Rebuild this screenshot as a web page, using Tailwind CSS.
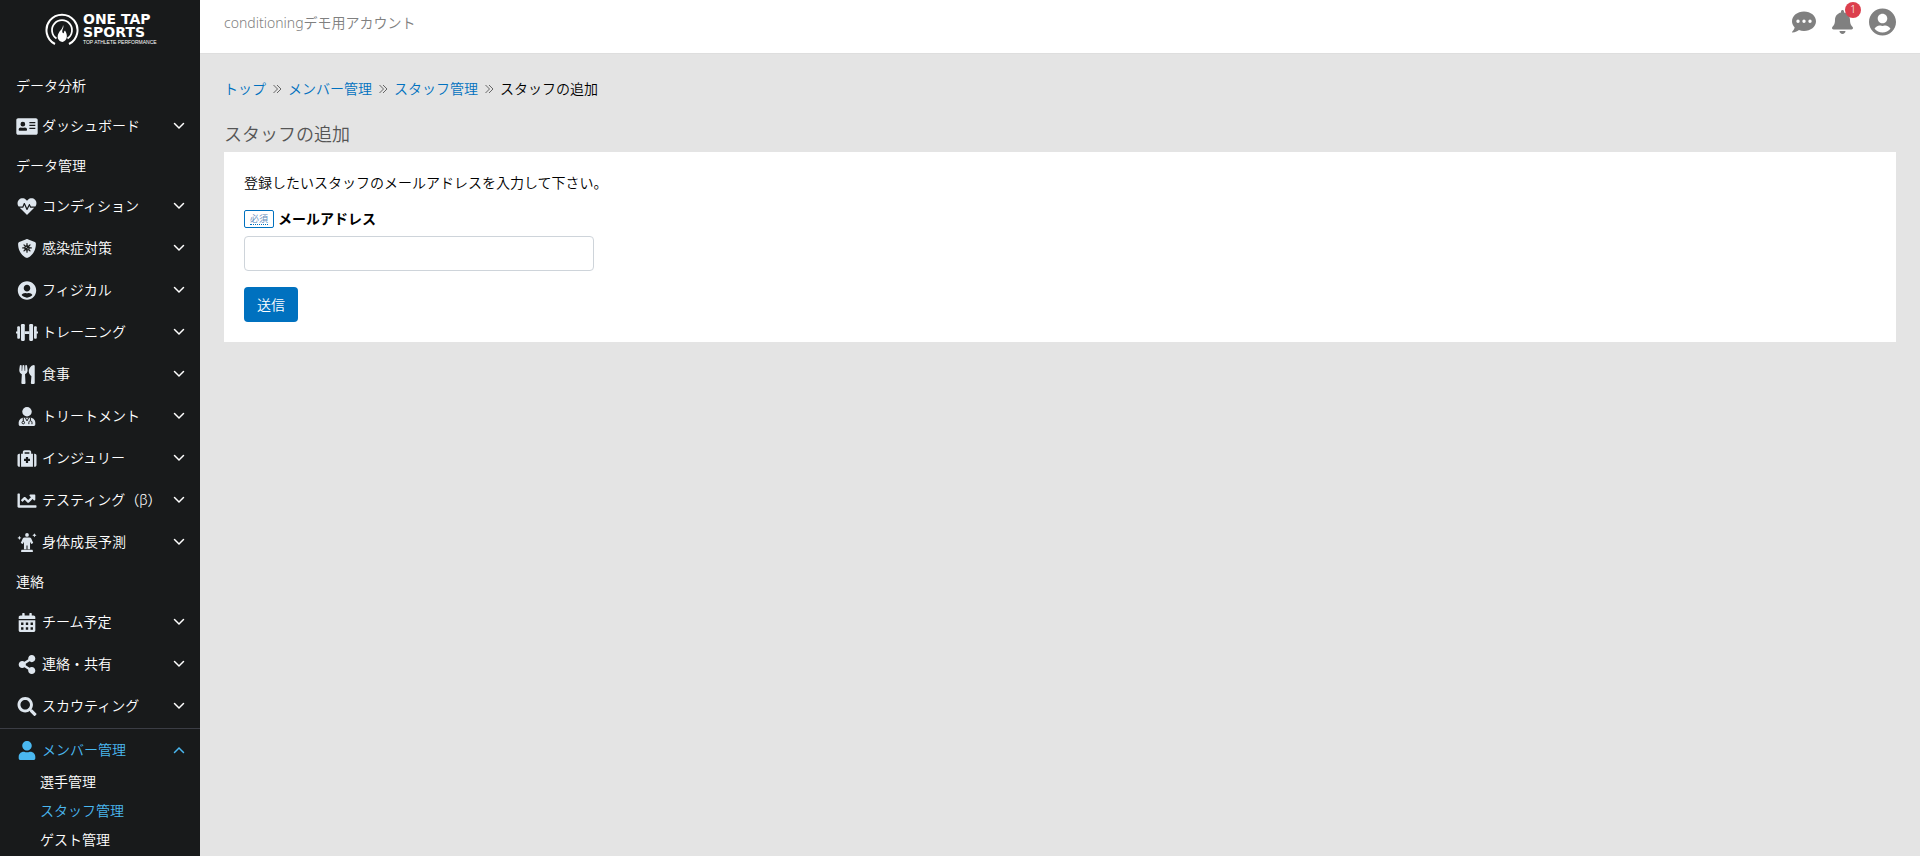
<!DOCTYPE html>
<html lang="ja">
<head>
  <meta charset="UTF-8">
  <title>スタッフの追加 | ONE TAP SPORTS</title>
  <meta name="viewport" content="width=device-width, initial-scale=1.0">
  <script src="https://cdn.jsdelivr.net/npm/@tailwindcss/browser@4"></script>
</head>
<body class="flex h-screen overflow-hidden bg-[#e4e4e4] font-['Noto_Sans','Noto_Sans_CJK_JP',sans-serif] text-sm font-[350] text-black">

  <!-- アイコン定義 -->
  <svg class="hidden">
    <symbol id="down" viewBox="0 0 12 12"><path d="M1.5 3.5 6 8l4.5-4.5" fill="none" stroke="currentColor" stroke-width="1.5" stroke-linecap="round"/></symbol>
    <symbol id="up" viewBox="0 0 12 12"><path d="M1.5 8.5 6 4l4.5 4.5" fill="none" stroke="currentColor" stroke-width="1.5" stroke-linecap="round"/></symbol>
    <symbol id="sep" viewBox="0 0 10 10"><path d="M1.500 1l4 4-4 4M5 1l4 4-4 4" fill="none" stroke="currentColor" stroke-width="1"/></symbol>
    <symbol id="card" viewBox="0 0 576 512"><path fill-rule="evenodd" d="M48 32h480c26 0 48 22 48 48v352c0 26-22 48-48 48H48c-26 0-48-22-48-48V80c0-26 22-48 48-48zM176 128a64 64 0 1 0 0 128 64 64 0 0 0 0-128zM120 280c-31 0-56 22-56 52v20c0 12 8 20 20 20h184c12 0 20-8 20-20v-20c0-30-25-52-56-52-36 12-76 12-112 0zM352 136v32h160v-32zM352 212v32h160v-32zM352 288v32h160v-32z"/></symbol>
    <symbol id="heart" viewBox="0 0 512 512"><path d="M320.2 243.8l-49.7 99.4c-6 12.1-23.4 11.7-28.9-.6l-56.9-126.3-30 71.7H60.6l182.5 186.5c7.1 7.3 18.6 7.3 25.7 0L451.4 288H342.3l-22.1-44.2zM473.7 73.9l-2.4-2.5c-51.5-52.6-135.8-52.6-187.4 0L256 100l-27.9-28.5c-51.5-52.7-135.9-52.7-187.4 0l-2.4 2.4C-10.4 123.7-12.5 203 31 256h102.4l35.9-86.2c5.4-12.9 23.6-13.2 29.4-.4l58.2 129.3 49-97.9c5.9-11.8 22.7-11.8 28.6 0l27.6 55.2H481c43.5-53 41.4-132.3-7.3-182.1z"/></symbol>
    <symbol id="shield" viewBox="0 0 512 512"><path d="M466 84 274 4c-12-5-25-5-37 0L45 84c-18 7-29 24-29 44 0 198 114 335 221 380 12 5 25 5 37 0 85-36 222-159 222-380 0-20-12-37-30-44z"/><g stroke="#181a1b" stroke-width="34" stroke-linecap="round"><path d="M256 125v230M141 240h230M175 159l162 162M337 159 175 321"/></g><circle cx="256" cy="240" r="72" fill="#181a1b"/><circle cx="234" cy="224" r="17"/><circle cx="282" cy="262" r="15"/></symbol>
    <symbol id="circle-user" viewBox="0 0 496 512"><path d="M248 8C111 8 0 119 0 256s111 248 248 248 248-111 248-248S385 8 248 8zm0 96c48.600 0 88 39.400 88 88s-39.400 88-88 88-88-39.400-88-88 39.400-88 88-88zm0 344c-58.700 0-111.300-26.600-146.500-68.200 18.800-35.400 55.600-59.800 98.500-59.800 2.400 0 4.800.4 7.100 1.100 13 4.200 26.600 6.900 40.900 6.900 14.300 0 28-2.700 40.900-6.900 2.300-.7 4.700-1.100 7.100-1.100 42.900 0 79.700 24.400 98.500 59.800C359.300 421.400 306.700 448 248 448z"/></symbol>
    <symbol id="dumbbell" viewBox="0 0 640 512"><rect x="144" y="12" width="112" height="488" rx="30"/><rect x="384" y="12" width="112" height="488" rx="30"/><rect x="36" y="76" width="80" height="360" rx="28"/><rect x="524" y="76" width="80" height="360" rx="28"/><path d="M0 224h60v64H0zM580 224h60v64h-60zM250 216h140v80H250z"/></symbol>
    <symbol id="utensils" viewBox="0 0 416 512"><path d="M207.900 15.200c.8 4.700 16.100 94.500 16.100 128.800 0 52.300-27.800 89.600-68.900 104.600L168 486.700c.7 13.700-10.200 25.300-24 25.300H80c-13.700 0-24.700-11.500-24-25.300l12.900-238.100C27.700 233.600 0 196.200 0 144 0 109.600 15.300 19.900 16.100 15.200 19.300-5.100 61.400-5.400 64 16.300v141.200c1.300 3.400 15.100 3.200 16 0 1.400-25.300 7.900-139.200 8-141.800 3.300-20.800 44.700-20.800 47.900 0 .2 2.700 6.600 116.500 8 141.800.9 3.200 14.800 3.400 16 0V16.300c2.600-21.600 44.800-21.400 48-1.100zm119.200 285.700l-15 185.100c-1.200 14 9.900 26 23.900 26h56c13.300 0 24-10.700 24-24V24c0-13.200-10.700-24-24-24-82.500 0-221.400 178.500-64.900 300.900z"/></symbol>
    <symbol id="doctor" viewBox="0 0 448 512"><circle cx="224" cy="128" r="128"/><path d="M134 288h180c74 0 134 60 134 134v42c0 26-22 48-48 48H48c-26 0-48-22-48-48v-42c0-74 60-134 134-134z"/><g fill="none" stroke="#181a1b" stroke-width="26"><circle cx="124" cy="420" r="34"/><path d="M124 285v100M274 462v-44c0-60 84-60 84 0v44M316 285v84M176 285l48 90 48-90"/></g></symbol>
    <symbol id="medkit" viewBox="0 0 512 512"><path fill-rule="evenodd" d="M96 480V128h48V80c0-26 22-48 48-48h128c26 0 48 22 48 48v48h48v352zM192 128h128V88H192zM226 216v50h-50v60h50v50h60v-50h50v-60h-50v-50z"/><path d="M64 480H48c-26 0-48-22-48-48V176c0-26 22-48 48-48h16zM448 480h16c26 0 48-22 48-48V176c0-26-22-48-48-48h-16z"/></symbol>
    <symbol id="chart" viewBox="0 0 512 512"><path d="M496 384H64V80c0-8.840-7.160-16-16-16H16C7.160 64 0 71.160 0 80v336c0 17.670 14.330 32 32 32h464c8.840 0 16-7.160 16-16v-32c0-8.840-7.160-16-16-16zM464 96H345.940c-21.380 0-32.090 25.850-16.970 40.970l32.400 32.400L288 242.750l-73.370-73.370c-12.500-12.500-32.760-12.500-45.250 0l-68.690 68.690c-6.250 6.250-6.250 16.380 0 22.630l22.620 22.620c6.250 6.250 16.380 6.250 22.630 0L192 237.250l73.370 73.370c12.500 12.500 32.760 12.500 45.250 0l96-96 32.400 32.400c15.120 15.120 40.970 4.410 40.970-16.970V112c.01-8.840-7.150-16-15.990-16z"/></symbol>
    <symbol id="growth" viewBox="0 0 512 512"><circle cx="256" cy="52" r="50"/><path d="M190 120h132c22 0 38 10 48 30l54 120-54 26-32-60v200h-68V340h-28v96h-68V236l-32 60-54-26 54-120c10-20 26-30 48-30zM124 452h264c16 0 26 12 26 30v30H98v-30c0-18 10-30 26-30zM52 76l18 38 38 18-38 18-18 38-18-38-38-18 38-18zM456 4l18 38 38 18-38 18-18 38-18-38-38-18 38-18z"/></symbol>
    <symbol id="calendar" viewBox="0 0 448 512"><path fill-rule="evenodd" d="M0 464c0 26.500 21.500 48 48 48h352c26.500 0 48-21.500 48-48V192H0v272zM64 256h64v64H64zM192 256h64v64h-64zM320 256h64v64h-64zM64 384h64v64H64zM192 384h64v64h-64zM320 384h64v64h-64zM400 64h-48V16c0-8.800-7.200-16-16-16h-32c-8.800 0-16 7.200-16 16v48H160V16c0-8.800-7.200-16-16-16h-32c-8.800 0-16 7.200-16 16v48H48C21.500 64 0 85.500 0 112v48h448v-48c0-26.500-21.500-48-48-48z"/></symbol>
    <symbol id="share" viewBox="0 0 448 512"><path d="M352 320c-22.608 0-43.387 7.819-59.790 20.895l-102.486-64.054a96.551 96.551 0 0 0 0-41.683l102.486-64.054C308.613 184.181 329.392 192 352 192c53.019 0 96-42.981 96-96S405.019 0 352 0s-96 42.981-96 96c0 7.158.79 14.130 2.276 20.841L155.790 180.895C139.387 167.819 118.608 160 96 160c-53.019 0-96 42.981-96 96s42.981 96 96 96c22.608 0 43.387-7.819 59.790-20.895l102.486 64.054A96.301 96.301 0 0 0 256 416c0 53.019 42.981 96 96 96s96-42.981 96-96-42.981-96-96-96z"/></symbol>
    <symbol id="search" viewBox="0 0 512 512"><path d="M505 442.700L405.300 343c-4.500-4.500-10.600-7-17-7H372c27.600-35.300 44-79.700 44-128C416 93.100 322.900 0 208 0S0 93.100 0 208s93.100 208 208 208c48.300 0 92.700-16.400 128-44v16.300c0 6.400 2.500 12.500 7 17l99.700 99.700c9.400 9.400 24.600 9.400 33.900 0l28.300-28.300c9.400-9.400 9.400-24.600.1-34zM208 336c-70.700 0-128-57.200-128-128 0-70.700 57.200-128 128-128 70.700 0 128 57.200 128 128 0 70.700-57.200 128-128 128z"/></symbol>
    <symbol id="user" viewBox="0 0 448 512"><path d="M224 256c70.700 0 128-57.300 128-128S294.700 0 224 0 96 57.300 96 128s57.300 128 128 128zm89.600 32h-16.700c-22.200 10.200-46.900 16-72.900 16s-50.600-5.800-72.900-16h-16.700C60.200 288 0 348.200 0 422.400V464c0 26.500 21.500 48 48 48h352c26.500 0 48-21.500 48-48v-41.600c0-74.200-60.200-134.400-134.400-134.400z"/></symbol>
    <symbol id="bell" viewBox="0 0 448 512"><path d="M224 512c35.320 0 63.970-28.650 63.970-64H160.030c0 35.350 28.650 64 63.970 64zm215.390-149.710c-19.320-20.760-55.470-51.990-55.470-154.290 0-77.700-54.480-139.900-127.940-155.160V32c0-17.670-14.320-32-31.980-32s-31.980 14.330-31.980 32v20.840C118.560 68.100 64.080 130.300 64.080 208c0 102.300-36.150 133.530-55.470 154.290-6 6.450-8.660 14.160-8.610 21.710.11 16.400 12.980 32 32.100 32h383.800c19.120 0 32-15.600 32.100-32 .05-7.550-2.610-15.270-8.610-21.710z"/></symbol>
    <symbol id="comment" viewBox="0 0 512 512"><path fill-rule="evenodd" d="M256 32C114.600 32 0 125.100 0 240c0 49.600 21.400 95 57 130.700C44.500 421.100 2.700 466 2.200 466.500c-2.200 2.300-2.800 5.700-1.500 8.700S4.800 480 8 480c66.300 0 116-31.800 140.600-51.400 32.700 12.300 69 19.400 107.400 19.400 141.400 0 256-93.100 256-208S397.400 32 256 32zM128 204a36 36 0 1 0 0 72 36 36 0 0 0 0-72zM256 204a36 36 0 1 0 0 72 36 36 0 0 0 0-72zM384 204a36 36 0 1 0 0 72 36 36 0 0 0 0-72z"/></symbol>
  </svg>

  <!-- サイドバー -->
  <aside class="flex w-[200px] shrink-0 flex-col overflow-hidden bg-[#181a1b] text-white">
    <a href="/" class="flex h-[67px] shrink-0 items-start gap-1 pl-[45px] pt-[13px]">
      <svg class="h-8 w-[34px] shrink-0" viewBox="0 0 34 32" fill="none" stroke="#fff">
        <path d="M10 31A15.500 15.500 0 1 1 24 31" stroke-width="2"/>
        <path d="M11.500 25.500A10 10 0 1 1 22.500 25.500" stroke-width="1.800"/>
        <path d="M18 12c1.500 3-1.500 4.500-.5 7.500.3 1.200 1.500 1 1.500-.2 0-.6.300-1.300 1-1.800 3 4.500 2.500 10-2.500 11.500-5-1-6-5.500-3.500-9.500 1.500-2.500 4-4 4-7.500z" fill="#fff" stroke="none"/>
      </svg>
      <span class="flex flex-col whitespace-nowrap font-['DejaVu_Sans'] text-sm/[13px] font-bold">
        <span>ONE TAP</span>
        <span>SPORTS</span>
        <span class="font-['Liberation_Sans'] text-[5px]/[6px] font-normal">TOP ATHLETE PERFORMANCE</span>
      </span>
    </a>
    <nav>
      <h2 class="flex h-[38px] items-center px-4">データ分析</h2>
      <ul>
        <li><button class="flex h-[42px] w-full items-center gap-1 pl-4 pr-[15px]"><svg class="h-[19px] w-[22px] fill-[#dee6ee]"><use href="#card"/></svg><span class="grow text-left">ダッシュボード</span><svg class="size-3"><use href="#down"/></svg></button></li>
      </ul>
      <h2 class="flex h-[38px] items-center px-4">データ管理</h2>
      <ul>
        <li><button class="flex h-[42px] w-full items-center gap-1 pl-4 pr-[15px]"><svg class="h-[19px] w-[22px] fill-[#dee6ee]"><use href="#heart"/></svg><span class="grow text-left">コンディション</span><svg class="size-3"><use href="#down"/></svg></button></li>
        <li><button class="flex h-[42px] w-full items-center gap-1 pl-4 pr-[15px]"><svg class="h-[19px] w-[22px] fill-[#dee6ee]"><use href="#shield"/></svg><span class="grow text-left">感染症対策</span><svg class="size-3"><use href="#down"/></svg></button></li>
        <li><button class="flex h-[42px] w-full items-center gap-1 pl-4 pr-[15px]"><svg class="h-[19px] w-[22px] fill-[#dee6ee]"><use href="#circle-user"/></svg><span class="grow text-left">フィジカル</span><svg class="size-3"><use href="#down"/></svg></button></li>
        <li><button class="flex h-[42px] w-full items-center gap-1 pl-4 pr-[15px]"><svg class="h-[19px] w-[22px] fill-[#dee6ee]"><use href="#dumbbell"/></svg><span class="grow text-left">トレーニング</span><svg class="size-3"><use href="#down"/></svg></button></li>
        <li><button class="flex h-[42px] w-full items-center gap-1 pl-4 pr-[15px]"><svg class="h-[19px] w-[22px] fill-[#dee6ee]"><use href="#utensils"/></svg><span class="grow text-left">食事</span><svg class="size-3"><use href="#down"/></svg></button></li>
        <li><button class="flex h-[42px] w-full items-center gap-1 pl-4 pr-[15px]"><svg class="h-[19px] w-[22px] fill-[#dee6ee]"><use href="#doctor"/></svg><span class="grow text-left">トリートメント</span><svg class="size-3"><use href="#down"/></svg></button></li>
        <li><button class="flex h-[42px] w-full items-center gap-1 pl-4 pr-[15px]"><svg class="h-[19px] w-[22px] fill-[#dee6ee]"><use href="#medkit"/></svg><span class="grow text-left">インジュリー</span><svg class="size-3"><use href="#down"/></svg></button></li>
        <li><button class="flex h-[42px] w-full items-center gap-1 pl-4 pr-[15px]"><svg class="h-[19px] w-[22px] fill-[#dee6ee]"><use href="#chart"/></svg><span class="grow whitespace-nowrap text-left">テスティング（β）</span><svg class="size-3 shrink-0"><use href="#down"/></svg></button></li>
        <li><button class="flex h-[42px] w-full items-center gap-1 pl-4 pr-[15px]"><svg class="h-[19px] w-[22px] fill-[#dee6ee]"><use href="#growth"/></svg><span class="grow text-left">身体成長予測</span><svg class="size-3"><use href="#down"/></svg></button></li>
      </ul>
      <h2 class="flex h-[38px] items-center px-4">連絡</h2>
      <ul>
        <li><button class="flex h-[42px] w-full items-center gap-1 pl-4 pr-[15px]"><svg class="h-[19px] w-[22px] fill-[#dee6ee]"><use href="#calendar"/></svg><span class="grow text-left">チーム予定</span><svg class="size-3"><use href="#down"/></svg></button></li>
        <li><button class="flex h-[42px] w-full items-center gap-1 pl-4 pr-[15px]"><svg class="h-[19px] w-[22px] fill-[#dee6ee]"><use href="#share"/></svg><span class="grow text-left">連絡・共有</span><svg class="size-3"><use href="#down"/></svg></button></li>
        <li><button class="flex h-[42px] w-full items-center gap-1 pl-4 pr-[15px]"><svg class="h-[19px] w-[22px] fill-[#dee6ee]"><use href="#search"/></svg><span class="grow text-left">スカウティング</span><svg class="size-3"><use href="#down"/></svg></button></li>
      </ul>
      <div class="mt-px border-t border-[#3b3d45] pt-1">
        <button class="flex h-[34px] w-full items-center gap-1 pl-4 pr-[15px] text-[#4ab8f0]"><svg class="h-[19px] w-[22px] fill-current"><use href="#user"/></svg><span class="grow text-left">メンバー管理</span><svg class="size-3"><use href="#up"/></svg></button>
        <ul class="pl-10">
          <li><a href="#" class="flex h-[29px] items-center">選手管理</a></li>
          <li><a href="#" class="flex h-[29px] items-center text-[#4ab8f0]">スタッフ管理</a></li>
          <li><a href="#" class="flex h-[29px] items-center">ゲスト管理</a></li>
        </ul>
      </div>
    </nav>
  </aside>

  <div class="flex min-w-0 grow flex-col">
    <!-- ヘッダー -->
    <header class="flex h-[54px] items-start justify-between border-b border-[#dedede] bg-white px-6 text-[#808080]">
      <span class="flex h-[46px] items-center">conditioningデモ用アカウント</span>
      <div class="flex h-[43px] items-center gap-4">
        <a href="#" aria-label="メッセージ"><svg class="size-6 fill-current"><use href="#comment"/></svg></a>
        <a href="#" aria-label="お知らせ" class="relative">
          <svg class="h-6 w-[21px] fill-current"><use href="#bell"/></svg>
          <span class="absolute -right-2 -top-2 flex size-4 items-center justify-center rounded-full bg-[#dc3f4d] text-[10px] text-white">1</span>
        </a>
        <a href="#" aria-label="アカウント"><svg class="h-7 w-[27px] fill-current"><use href="#circle-user"/></svg></a>
      </div>
    </header>

    <main class="px-6 pt-[23px]">
      <nav class="flex h-6 items-center">
        <a href="#" class="text-[#0071bf]">トップ</a>
        <svg class="mx-[6px] size-[10px] text-[#666]"><use href="#sep"/></svg>
        <a href="#" class="text-[#0071bf]">メンバー管理</a>
        <svg class="mx-[6px] size-[10px] text-[#666]"><use href="#sep"/></svg>
        <a href="#" class="text-[#0071bf]">スタッフ管理</a>
        <svg class="mx-[6px] size-[10px] text-[#666]"><use href="#sep"/></svg>
        <span>スタッフの追加</span>
      </nav>
      <h1 class="mb-[5px] mt-5 text-lg/[26px] text-[#555]">スタッフの追加</h1>
      <form class="bg-white p-5">
        <p class="leading-[22px]">登録したいスタッフのメールアドレスを入力して下さい。</p>
        <div class="mt-[14px] flex h-[22px] items-center gap-1">
          <span class="flex h-[18px] w-[30px] items-center justify-center rounded-xs border border-[#0071bf] text-[9px]/[11px] text-[#5b86b8]"><abbr title="必須" class="border-b border-dotted border-[#0071bf] no-underline">必須</abbr></span>
          <label for="email" class="font-bold">メールアドレス</label>
        </div>
        <input id="email" type="email" class="mt-[6px] block h-[35px] w-full max-w-[350px] rounded border border-[#ced4da] px-3">
        <button type="submit" class="mt-4 h-[35px] rounded bg-[#0071bf] px-[13px] text-white">送信</button>
      </form>
    </main>
  </div>
</body>
</html>
